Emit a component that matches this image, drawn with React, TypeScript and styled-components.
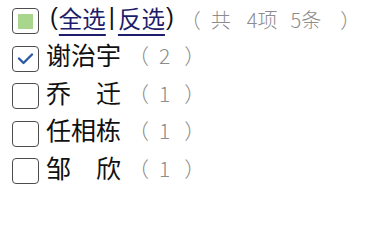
import React from "react";
import styled, { createGlobalStyle } from "styled-components";

type BoxState = "partial" | "checked" | "empty";

interface Person {
  name: string;
  count: number;
  checked: boolean;
}

// each piece of a grey counter: [text, space before it in px]
type Piece = [string, number];

const people: Person[] = [
  { name: "谢治宇", count: 2, checked: true },
  { name: "乔\u3000迁", count: 1, checked: false },
  { name: "任相栋", count: 1, checked: false },
  { name: "邹\u3000欣", count: 1, checked: false },
];

const summary: Piece[] = [
  ["（", 6],
  ["共", 10],
  ["4项", 16],
  ["5条", 13],
  ["）", 19],
];

export default function App() {
  return (
    <>
      <GlobalStyle />
      <List>
        <Row>
          <Box $state="partial" />
          <Header>
            <Paren>(</Paren>
            <Link>全选</Link>
            <Sep>|</Sep>
            <Link>反选</Link>
            <Paren>)</Paren>
          </Header>
          <Counter $size={20} $lift={4}>
            {summary.map(([t, g]) => (
              <Piece key={t} $gap={g}>{t}</Piece>
            ))}
          </Counter>
        </Row>
        {people.map(p => (
          <Row key={p.name}>
            <Box $state={p.checked ? "checked" : "empty"} />
            <Name>{p.name}</Name>
            <Counter $size={21} $lift={7}>
              <Piece $gap={7}>（</Piece>
              <Piece $gap={10}>{p.count}</Piece>
              <Piece $gap={14}>）</Piece>
            </Counter>
          </Row>
        ))}
      </List>
    </>
  );
}

function Box({ $state }: { $state: BoxState }) {
  return (
    <BoxFrame>
      {$state === "partial" && <Fill />}
      {$state === "checked" && (
        <svg width="17" height="14" viewBox="0 0 17 14">
          <path
            d="M2 6.5 L6.5 11 L15 2.5"
            fill="none"
            stroke="#2c5aa8"
            strokeWidth="2.4"
            strokeLinecap="round"
            strokeLinejoin="round"
          />
        </svg>
      )}
    </BoxFrame>
  );
}

const GlobalStyle = createGlobalStyle`
  body {
    margin: 0;
    background: #fff;
    font-family: "Noto Sans CJK SC", "Noto Sans", sans-serif;
  }
`;

const List = styled.div`
  display: flex;
  flex-direction: column;
  gap: 11.5px;
  padding: 8px 0 0 12px;
`;

const Row = styled.div`
  display: flex;
  align-items: center;
  height: 26px;
  white-space: nowrap;
`;

const BoxFrame = styled.div`
  box-sizing: border-box;
  width: 27px;
  height: 26px;
  border: 1.5px solid #4d4d4d;
  border-radius: 4px;
  background: #fff;
  display: flex;
  align-items: center;
  justify-content: center;
  flex-shrink: 0;
  margin-right: 7px;
`;

const Fill = styled.div`
  width: 15px;
  height: 15px;
  background: #a8d68c;
`;

const Header = styled.div`
  display: flex;
  align-items: center;
  font-size: 23.5px;
  color: #111;
  margin: 0 0 7px 3px;
`;

const Paren = styled.span`
  font-family: "Liberation Sans", sans-serif;
  margin: 0 1px;
`;

const Link = styled.span`
  color: #1d1d6b;
  text-decoration: underline;
  text-decoration-thickness: 1.5px;
  text-underline-offset: 6px;
`;

const Sep = styled.span`
  font-family: "Liberation Sans", sans-serif;
  margin: 0 3px;
`;

const Counter = styled.span<{ $size: number; $lift: number }>`
  display: flex;
  font-size: ${p => p.$size}px;
  font-weight: 300;
  color: #8c8c8c;
  margin-bottom: ${p => p.$lift}px;
`;

const Piece = styled.span<{ $gap: number }>`
  margin-left: ${p => p.$gap}px;
`;

const Name = styled.span`
  font-size: 25px;
  color: #111;
  margin-bottom: 9px;
`;
